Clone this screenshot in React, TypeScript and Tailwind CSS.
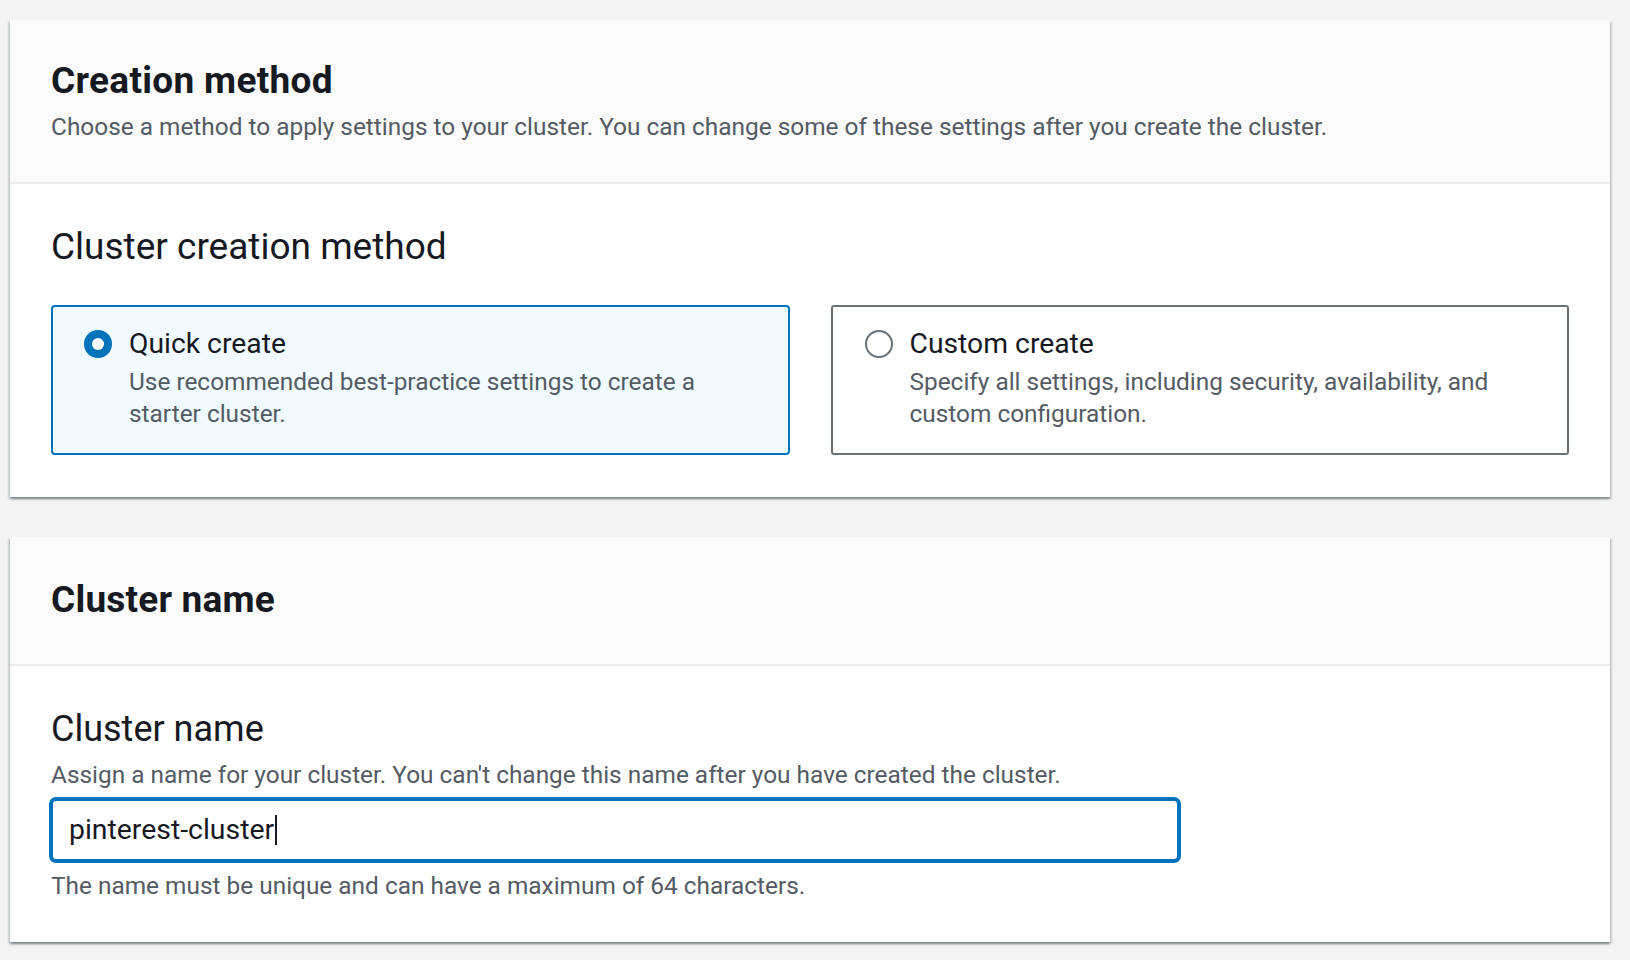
function Radio({ checked }: { checked: boolean }) {
  return checked ? (
    <div className="mt-[6px] flex h-[28px] w-[28px] shrink-0 items-center justify-center rounded-full bg-[#0073bb]">
      <div className="h-[12px] w-[12px] rounded-full bg-white"></div>
    </div>
  ) : (
    <div className="mt-[6px] h-[28px] w-[28px] shrink-0 rounded-full border-[2.5px] border-[#687078] bg-white"></div>
  );
}

function Tile({
  checked,
  title,
  description,
}: {
  checked: boolean;
  title: string;
  description: string;
}) {
  return (
    <div
      className={
        checked
          ? "flex h-[150px] gap-[17px] rounded-[4px] border-2 border-[#0073bb] bg-[#f1faff] pl-[31px] pr-[40px] pt-[17px]"
          : "flex h-[150px] gap-[17px] rounded-[3px] border-2 border-[#687078] bg-white pl-[32px] pr-[40px] pt-[17px]"
      }
    >
      <Radio checked={checked} />
      <div className="flex flex-col">
        <div className="text-[28.3px] leading-[40px] text-[#16191f]">{title}</div>
        <div className="mt-[2px] text-[24.4px] leading-[32px] text-[#545b64]">{description}</div>
      </div>
    </div>
  );
}

export default function App() {
  const card =
    "bg-white shadow-[0_2px_2px_0_rgba(0,28,36,0.35),2px_2px_2px_0_rgba(0,28,36,0.12),-2px_2px_2px_0_rgba(0,28,36,0.12)]";

  return (
    <div className="min-h-[960px] w-full bg-[#f2f3f3] pb-[18px] pl-[10px] pr-[20px] pt-[20px] font-['Roboto',sans-serif]">
      {/* Creation method */}
      <div className={card}>
        <div className="border-b-2 border-[#eaeded] bg-[#fafafa] px-[41px] pb-[39px] pt-[39px]">
          <h2 className="text-[37px] font-bold leading-[44px] tracking-[0.3px] text-[#16191f]">Creation method</h2>
          <p className="mt-[8px] text-[24.4px] leading-[32px] text-[#545b64]">
            Choose a method to apply settings to your cluster. You can change some of these settings after you create
            the cluster.
          </p>
        </div>
        <div className="px-[41px] pb-[42px] pt-[41px]">
          <div className="text-[37px] leading-[44px] text-[#16191f]">Cluster creation method</div>
          <div className="mt-[36px] grid grid-cols-2 gap-[41px]">
            <Tile
              checked
              title="Quick create"
              description="Use recommended best-practice settings to create a starter cluster."
            />
            <Tile
              checked={false}
              title="Custom create"
              description="Specify all settings, including security, availability, and custom configuration."
            />
          </div>
        </div>
      </div>

      {/* Cluster name */}
      <div className={`${card} mt-[40px]`}>
        <div className="border-b-2 border-[#eaeded] bg-[#fafafa] px-[41px] pb-[42px] pt-[41px]">
          <h2 className="text-[37px] font-bold leading-[44px] tracking-[0.2px] text-[#16191f]">Cluster name</h2>
        </div>
        <div className="px-[41px] pb-[40px] pt-[41px]">
          <div className="text-[36px] leading-[44px] text-[#16191f]">Cluster name</div>
          <p className="mt-[8px] text-[24.4px] leading-[32px] text-[#545b64]">
            Assign a name for your cluster. You can't change this name after you have created the cluster.
          </p>
          <div className="-ml-[2px] mt-[6px] flex h-[66px] w-[1132px] items-center rounded-[7px] border-4 border-[#0073bb] bg-white pl-[16px]">
            <span className="text-[28.4px] text-[#16191f]">pinterest-cluster</span>
            <span className="ml-[1px] h-[30px] w-[2px] bg-[#16191f]"></span>
          </div>
          <p className="mt-[7px] text-[24.4px] leading-[32px] text-[#545b64]">
            The name must be unique and can have a maximum of 64 characters.
          </p>
        </div>
      </div>
    </div>
  );
}
